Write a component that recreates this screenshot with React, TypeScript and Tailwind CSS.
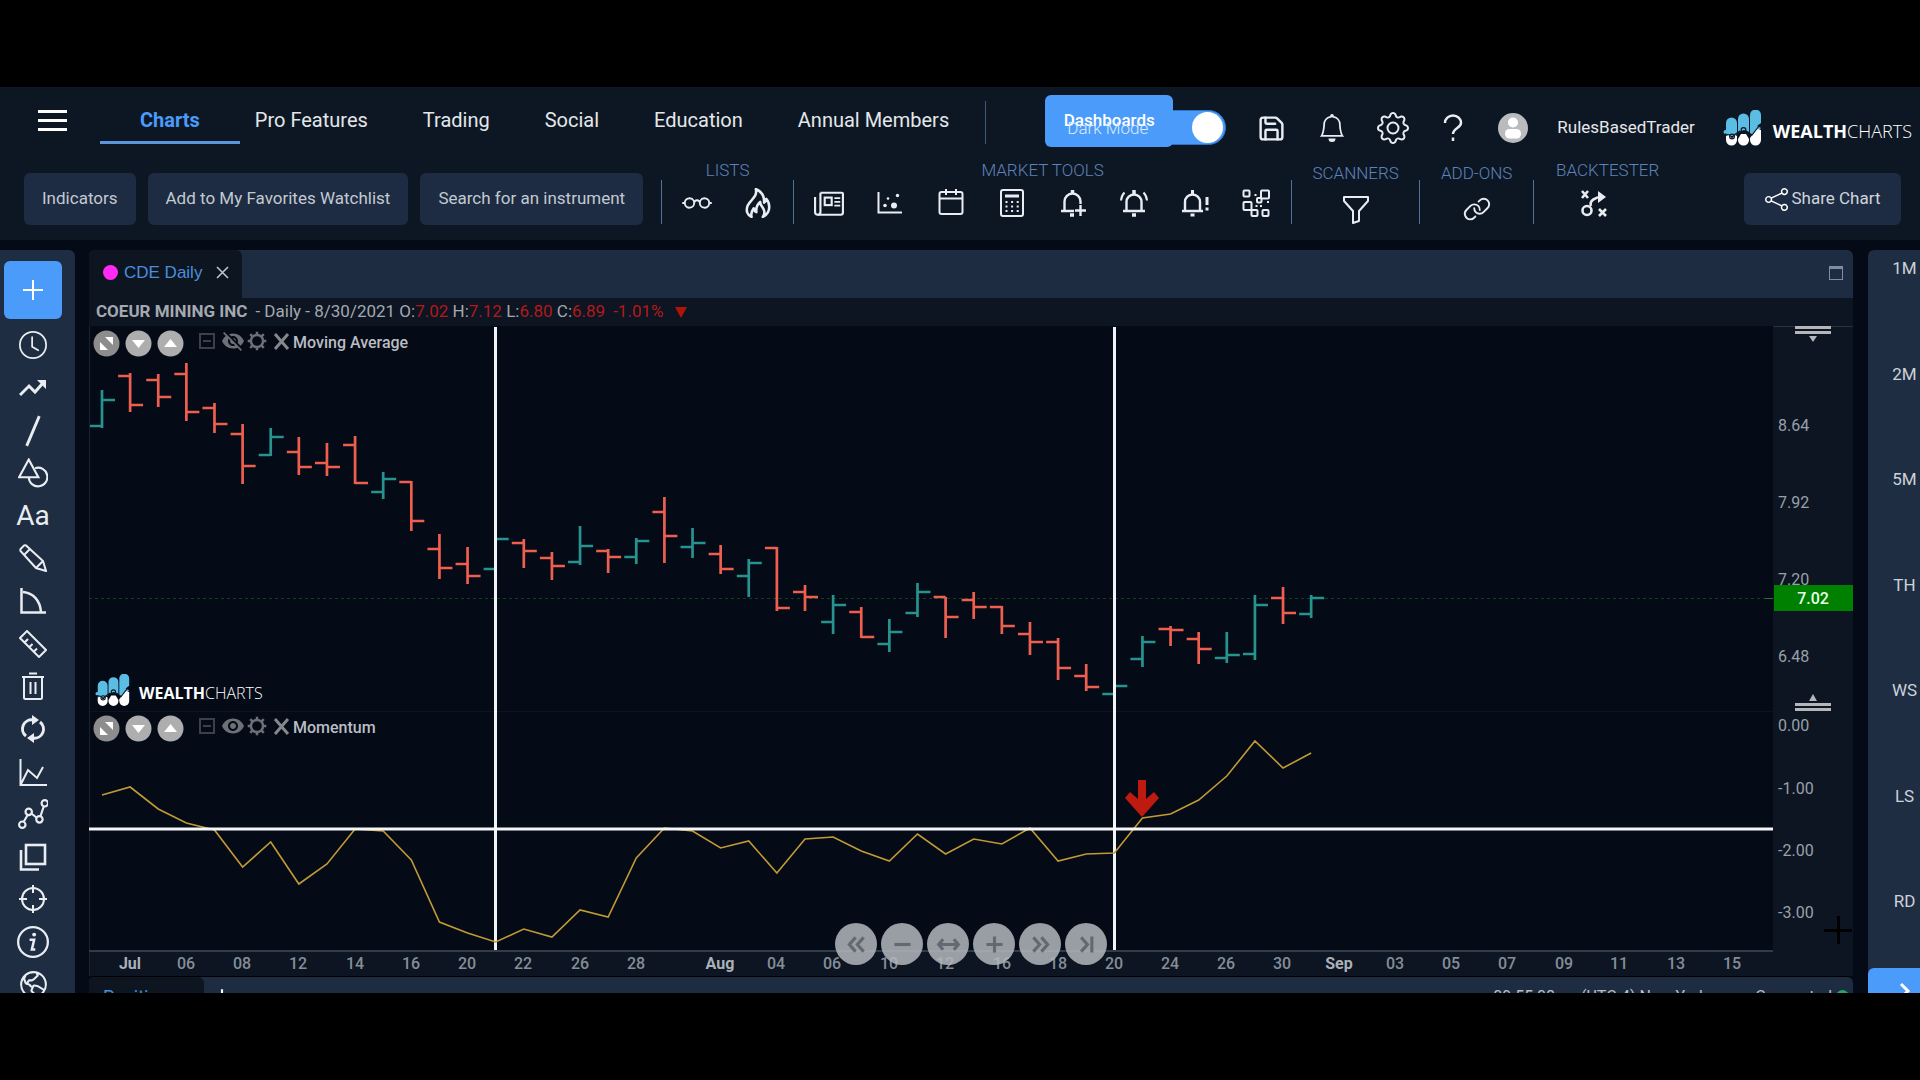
import React from "react";
import { BsGear, BsBell, BsEyeglasses, BsShare, BsFunnel, BsClock } from "react-icons/bs";
import { LuSave } from "react-icons/lu";
import { MdVisibility, MdVisibilityOff } from "react-icons/md";
import { PiLink, PiGlobeHemisphereWest } from "react-icons/pi";

type IconProps = { size?: number; children: React.ReactNode; width?: number };

function Icon({ size = 28, width = 2, children }: IconProps) {
  return (
    <svg width={size} height={size} viewBox="0 0 28 28" fill="none" stroke="currentColor" strokeWidth={width} aria-hidden="true">
      {children}
    </svg>
  );
}

function LogoMark({ size }: { size: number }) {
  return (
    <svg width={size} height={(size * 36) / 40} viewBox="0 0 40 36" aria-hidden="true">
      <g fill="#5bbce4">
        <path d="M3 25V13a5 5 0 0 1 11 0v11l-5 2z" />
        <path d="M15 22V9a5 5 0 0 1 11 0v13l-5-2z" />
        <path d="M27 24V5a5 5 0 0 1 11 0v8l-4 3 4 2-7 7z" />
      </g>
      <circle cx="2.500" cy="22" r="2" fill="#5bbce4" />
      <g fill="#fff">
        <path d="M3 26l3-1 3 3.500 3-3.500 2 1v4a5.500 5.500 0 0 1-11 0z" />
        <path d="M15 29l3-5h5l3 5v1a5.500 5.500 0 0 1-11 0z" />
        <path d="M27 28l7-9 4 1v10a5.500 5.500 0 0 1-11 0z" />
      </g>
      <g fill="none" stroke="#0d1724" strokeWidth="1.200">
        <path d="M2 24l5 1M11 25l6-4M23 21l6 4 7-9" />
        <circle cx="9" cy="26.500" r="2.400" />
        <circle cx="20.500" cy="20" r="2.400" />
      </g>
    </svg>
  );
}

function Logo({ small = false }: { small?: boolean }) {
  return (
    <div className={small ? "flex items-center gap-2" : "flex items-center gap-2.5"}>
      <LogoMark size={small ? 36 : 40} />
      <span className={small ? "pt-1.5 font-['Open_Sans'] text-[16px] leading-5 text-white" : "pt-1.5 font-['Open_Sans'] text-[18px] leading-5 text-white"}>
        <b>WEALTH</b>
        <span className="font-light">CHARTS</span>
      </span>
    </div>
  );
}

const marketTools = [
  {
    name: "News",
    icon: (
      <Icon size={31}>
        <path d="M6 4h20a1 1 0 0 1 1 1v17.500a2 2 0 0 1-2 2H3.500a2.500 2.500 0 0 1-2.500-2.500V8" />
        <path d="M6 4v18a2.500 2.500 0 0 1-2.500 2.500" />
        <rect x="10" y="8.500" width="6.500" height="7" />
        <path d="M19 9h5.500M19 12.500h5.500M19 16h5.500" strokeWidth="1.600" />
      </Icon>
    ),
  },
  {
    name: "Scatter plot",
    icon: (
      <Icon>
        <path d="M2.500 3v20.500H26" />
        <g fill="currentColor" stroke="none">
          <circle cx="9" cy="16.500" r="1.800" />
          <circle cx="18" cy="16.500" r="3" />
          <circle cx="12" cy="9.500" r="1.300" />
          <circle cx="21.500" cy="6.500" r="1.700" />
        </g>
      </Icon>
    ),
  },
  {
    name: "Calendar",
    icon: (
      <Icon>
        <rect x="2.500" y="3" width="23" height="22" rx="2" />
        <path d="M2.500 9.500h23M9 0v6M19 0v6" />
      </Icon>
    ),
  },
  {
    name: "Calculator",
    icon: (
      <Icon>
        <rect x="3" y="1" width="22" height="26" rx="2" />
        <path d="M7 7h14" strokeWidth="3" />
        <path d="M7.500 13h14M7.500 17.500h14M7.500 22h14" strokeDasharray="2 3.600" />
      </Icon>
    ),
  },
  {
    name: "Add alert",
    icon: (
      <Icon>
        <path d="M2 22h13M5.500 22V12.500a8 8 0 0 1 16 0V15M21.500 16v11M16 21.500h11" strokeWidth="2.400" />
        <path d="M13.500 1v3.500M11 26h4" strokeWidth="3.500" />
      </Icon>
    ),
  },
  {
    name: "Active alerts",
    icon: (
      <Icon>
        <path d="M3 22h22M6.500 22v-9a7.500 7.500 0 0 1 15 0v9" strokeWidth="2.400" />
        <path d="M14 1v4.500M12 26h4" strokeWidth="3.500" />
        <path d="M4.500 3.500q-3 3-3.500 8M23.500 3.500q3 3 3.500 8" />
      </Icon>
    ),
  },
  {
    name: "Alert log",
    icon: (
      <Icon>
        <path d="M1 22h21M4 22v-9a7.500 7.500 0 0 1 15 0v9" strokeWidth="2.400" />
        <path d="M11.500 1v4.500M9.500 26h4M26 8v8M26 18.500v3" strokeWidth="3" />
      </Icon>
    ),
  },
  {
    name: "Heat map",
    icon: (
      <Icon>
        <rect x="1.500" y="1.500" width="6" height="6" rx="1" />
        <rect x="19" y="1.500" width="8" height="8" rx="1" />
        <rect x="15" y="9" width="4.500" height="4.500" rx="1" />
        <rect x="1.500" y="13" width="8" height="8" rx="1" />
        <rect x="9.500" y="21" width="6" height="6" rx="1" />
        <rect x="20.500" y="21" width="6" height="6" rx="1" />
        <path d="M12.500 6h2M18 17h2M25 13h2M13.500 17h2" />
      </Icon>
    ),
  },
];

function IconButton({ label, children, className = "" }: { label: string; children: React.ReactNode; className?: string }) {
  return (
    <button type="button" aria-label={label} className={"flex items-center justify-center text-[#e9edf2] " + className}>
      {children}
    </button>
  );
}

function Divider() {
  return <span className="mt-[25px] h-11 w-px shrink-0 bg-[#53709a]" />;
}

function ToolGroup({ title, className, children }: { title: string; className: string; children: React.ReactNode }) {
  return (
    <div className={"flex shrink-0 flex-col items-center " + className}>
      <span className="text-[17px] leading-5 font-light text-[#5f82b8]">{title}</span>
      {children}
    </div>
  );
}

const navItems = ["Charts", "Pro Features", "Trading", "Social", "Education", "Annual Members"];

function Header() {
  return (
    <header className="shrink-0 bg-[#0d1724]">
      <div className="flex h-[68px] items-start">
        <button type="button" aria-label="Menu" className="ml-[38px] mt-[23px] flex w-[29px] shrink-0 flex-col gap-1.5">
          <span className="h-[3px] bg-white" />
          <span className="h-[3px] bg-white" />
          <span className="h-[3px] bg-white" />
        </button>
        <nav className="ml-[73px] mt-[21px] flex shrink-0 gap-[55px] text-[20px] leading-6 text-[#e4e7ea]">
          {navItems.map((n, i) => (
            <a key={n} href="#" className={i === 0 ? "relative font-bold text-[#4a9bfa]" : ""}>
              {n}
              {i === 0 && <span className="absolute -inset-x-10 top-[33px] h-[3px] bg-[#5c97dd]" />}
            </a>
          ))}
        </nav>
        <span className="ml-9 mt-3.5 h-[43px] w-px shrink-0 bg-[#41587b]" />
        <div className="relative ml-auto mt-2 h-[52px] w-[181px] shrink-0">
          <label className="absolute right-0 top-[15px] flex h-[35px] w-[70px] cursor-pointer items-center justify-end rounded-full border border-[#2f73c4] bg-[#4a9bfa] pr-0.5">
            <input type="checkbox" defaultChecked aria-label="Dark Mode" className="peer sr-only" />
            <span className="size-[31px] rounded-full bg-white" />
          </label>
          <button type="button" className="absolute left-0 top-0 h-[52px] w-32 rounded-md bg-[#4a9bfa] text-[17px] font-medium text-white">
            Dashboards
          </button>
          <span className="pointer-events-none absolute left-[22px] top-[23px] text-[17px] leading-5 font-light text-[#dcebff]">Dark Mode</span>
        </div>
        <div className="ml-[30px] mt-6 flex h-[34px] shrink-0 items-center">
          <IconButton label="Save" className="w-[30px]"><LuSave size={29} strokeWidth={2} /></IconButton>
          <IconButton label="Notifications" className="ml-[31px] w-[30px]"><BsBell size={28} /></IconButton>
          <IconButton label="Settings" className="ml-[30px] w-8"><BsGear size={32} /></IconButton>
          <IconButton label="Help" className="ml-[30px] w-7">
            <Icon width={2.5}>
              <path d="M6 9a8 7.500 0 0 1 16 0c0 5-8 5-8 11" />
              <path d="M14 23.500v3.500" />
            </Icon>
          </IconButton>
          <svg width="30" height="30" viewBox="0 0 30 30" className="ml-[31px]" aria-hidden="true">
            <circle cx="15" cy="15" r="15" fill="#b9bbbd" />
            <circle cx="15" cy="9.500" r="5" fill="#fff" />
            <rect x="7" y="16" width="16" height="9.500" rx="4.500" fill="#fff" />
          </svg>
          <span className="ml-[29px] text-[17px] text-[#e6e8ea]">RulesBasedTrader</span>
          <span className="ml-7 mr-2"><Logo /></span>
        </div>
      </div>

      <div className="flex h-[85px] items-start">
        <div className="ml-6 mt-[18px] flex shrink-0 gap-3 text-[17px] text-[#c3c9d1]">
          {["Indicators", "Add to My Favorites Watchlist", "Search for an instrument"].map((t) => (
            <button key={t} type="button" className="h-[52px] rounded-md bg-[#1d2c42] px-[18px]">{t}</button>
          ))}
        </div>
        <span className="w-[18px] shrink-0" />
        <Divider />
        <ToolGroup title="LISTS" className="mt-[5px] w-[131px]">
          <div className="mt-2 flex h-[30px] items-center gap-[31px]">
            <IconButton label="Watchlists" className="w-[30px]"><BsEyeglasses size={32} /></IconButton>
            <IconButton label="Hot list" className="w-[30px]">
              <Icon size={30} width={2.4}>
                <path d="M12 1c1 5-1 7-4 10.500c-4 4-5.500 7-4 11.500c.8 2 2 3.300 4 4c-1-3.500.5-6 2-8c.5 2 1 3 2.500 3.500c-.5-4 .5-7 3.500-9.500c0 4 4 5.500 4 9.500c0 2-.5 3.500-1.500 4.500c4-2 6-5 6-9.300c0-3-1-5.500-2.800-7.500c-.3 2-1 3-2 3.500c.3-5-2-10.200-7.700-12.700z" strokeLinejoin="round" />
              </Icon>
            </IconButton>
          </div>
        </ToolGroup>
        <Divider />
        <ToolGroup title="MARKET TOOLS" className="mt-[5px] w-[497px]">
          <div className="mt-2 flex h-[30px] items-center gap-[31px]">
            {marketTools.map((t) => (
              <IconButton key={t.name} label={t.name} className="w-[30px]">{t.icon}</IconButton>
            ))}
          </div>
        </ToolGroup>
        <Divider />
        <ToolGroup title="SCANNERS" className="mt-2 w-[127px]">
          <IconButton label="Scanners" className="mt-3 h-[30px]"><BsFunnel size={32} /></IconButton>
        </ToolGroup>
        <Divider />
        <ToolGroup title="ADD-ONS" className="mt-2 w-[113px]">
          <IconButton label="Add-ons" className="mt-[11px] h-[30px]"><PiLink size={30} /></IconButton>
        </ToolGroup>
        <Divider />
        <ToolGroup title="BACKTESTER" className="mt-[5px] w-[147px]">
          <IconButton label="Backtester" className="mr-7 mt-2 h-[30px]">
            <Icon width={2.6}>
              <path d="M2 2l6 7M8 2l-6 7M19 20l7 7M26 20l-7 7" />
              <circle cx="7" cy="21.500" r="4.500" />
              <path d="M11 17c-2-5 4-9 11-9" />
              <path d="M18 2l8 6-8 6z" fill="currentColor" stroke="none" />
            </Icon>
          </IconButton>
        </ToolGroup>
        <button type="button" className="ml-auto mr-[19px] mt-[18px] flex h-[52px] w-[157px] shrink-0 items-center justify-center gap-1 rounded-md bg-[#1d2c42] text-[17px] text-[#d0d5dc]">
          <BsShare size={23} className="text-white" />
          Share Chart
        </button>
      </div>
    </header>
  );
}

const drawTools: { name: string; icon: React.ReactNode }[] = [
  { name: "History", icon: <BsClock size={28} /> },
  { name: "Trend", icon: <Icon><path d="M1 21l9-9 6 6 8-9" strokeWidth="3" /><path d="M18 6h9v9z" fill="currentColor" stroke="none" /></Icon> },
  { name: "Line", icon: <Icon size={32}><path d="M8.500 27L19.500 1" strokeWidth="2.500" /></Icon> },
  { name: "Shapes", icon: <Icon size={30}><path d="M10 1.500l9 16.500H1z" /><path d="M16 9.500a8.700 8.700 0 1 1-6 8.500" /></Icon> },
  { name: "Text", icon: <span className="text-[28px] leading-8">Aa</span> },
  { name: "Pencil", icon: <Icon><path d="M1.500 7a3 3 0 0 1 0-2L5 1.500a3 3 0 0 1 2 0L24 17l3 10-10-3zM5.500 10.500l5-5M17 24l7-7" /></Icon> },
  { name: "Angle", icon: <Icon><path d="M2.500 1v24.500H27M4 5c10 1 17 8 18 20" strokeWidth="2.500" /></Icon> },
  { name: "Ruler", icon: <Icon><path d="M1 8l7-7 19 19-7 7zM6 12l3-3M10.500 17l3-3M15 21.500l3-3" /></Icon> },
  { name: "Delete", icon: <Icon><path d="M3 5h22M10 1.500h8M5 5v20.500a1.500 1.500 0 0 0 1.500 1.500h15a1.500 1.500 0 0 0 1.500-1.500V5M11.500 10v12M16.500 10v12" /></Icon> },
  {
    name: "Reset",
    icon: (
      <Icon width={3}>
        <path d="M14 5a9 9 0 0 0-7 16M14 23a9 9 0 0 0 7-16" />
        <path d="M13 0l7 5-7 5zM15 18l-7 5 7 5z" fill="currentColor" stroke="none" />
      </Icon>
    ),
  },
  { name: "Chart", icon: <Icon><path d="M1.500 1v26H28M2 26l7-14 9 8 6-11" /></Icon> },
  {
    name: "Pattern",
    icon: (
      <Icon size={30}>
        <circle cx="4" cy="24" r="3" />
        <circle cx="10" cy="12" r="3" />
        <circle cx="20" cy="19" r="3" />
        <circle cx="25" cy="4" r="3" />
        <path d="M5.500 21L9 15M12.500 13.500l5 4M21 16l3-9" />
      </Icon>
    ),
  },
  { name: "Duplicate", icon: <Icon width={2.6}><rect x="7" y="2" width="19" height="19" /><path d="M2 7v19.500h18" /></Icon> },
  { name: "Crosshair", icon: <Icon><circle cx="14" cy="14" r="11" /><path d="M14 0v8M14 20v8M0 14h8M20 14h8" /></Icon> },
  {
    name: "Info",
    icon: (
      <Icon size={32}>
        <circle cx="14" cy="14" r="13" />
        <circle cx="15" cy="7.500" r="1.700" fill="currentColor" stroke="none" />
        <path d="M11 12h4l-2 8.500h3" strokeWidth="2.200" />
      </Icon>
    ),
  },
  { name: "Globe", icon: <PiGlobeHemisphereWest size={33} /> },
];

function LeftToolbar() {
  return (
    <aside className="flex w-[75px] shrink-0 flex-col items-start overflow-hidden rounded-tr-md bg-[#1e2d42] pl-1 pt-[11px]">
      <IconButton label="Add" className="size-[58px] shrink-0 rounded-md bg-[#4a9bfa] text-white">
        <Icon><path d="M14 4v20M4 14h20" /></Icon>
      </IconButton>
      <div className="mt-[5px] flex h-[682px] w-[58px] shrink-0 flex-col text-[#eef2f7]">
        {drawTools.map((t) => (
          <IconButton key={t.name} label={t.name} className="min-h-0 flex-1">{t.icon}</IconButton>
        ))}
      </div>
    </aside>
  );
}

const BAR_STEP = 28.12;
const BAR_START = 102;
const barX = (i: number) => BAR_START + BAR_STEP * i;

// open, high, low, close as heights on the price pane
const bars: number[][] = [
  [426, 390, 427, 400], [376, 373, 411, 405], [380, 374, 406, 397], [374, 363, 420, 412], [408, 403, 432, 424],
  [434, 424, 483, 466], [455, 428, 455, 437], [452, 437, 474, 467], [463, 443, 475, 467], [445, 436, 483, 483],
  [492, 472, 498, 479], [482, 481, 530, 521], [549, 534, 578, 568], [564, 547, 583, 576], [569, 536, 572, 539],
  [543, 539, 567, 551], [558, 552, 579, 566], [562, 526, 564, 546], [551, 549, 572, 557], [557, 538, 563, 541],
  [512, 497, 562, 536], [547, 528, 557, 543], [554, 545, 573, 569], [576, 559, 596, 563], [548, 547, 610, 608],
  [592, 585, 610, 597], [622, 595, 633, 605], [612, 607, 637, 637], [644, 619, 651, 632], [613, 583, 616, 592],
  [597, 597, 637, 617], [600, 592, 618, 607], [607, 606, 633, 626], [634, 622, 654, 642], [642, 638, 679, 668],
  [676, 664, 690, 687], [694, 684, 697, 686], [659, 636, 666, 642], [629, 626, 645, 630], [639, 632, 663, 649],
  [658, 632, 662, 655], [654, 595, 659, 605], [598, 587, 623, 613], [614, 595, 617, 598],
];

const momentum = [
  795, 787, 809, 823, 830, 867, 842, 884, 864, 829, 831, 860, 922, 933, 942, 929, 937, 910, 917, 858, 828, 831,
  848, 841, 873, 839, 837, 851, 861, 834, 854, 839, 844, 828, 861, 854, 853, 818, 814, 800, 776, 741, 768, 753,
];

const dates: [string, number][] = [
  ["Jul", 130], ["06", 186], ["08", 242], ["12", 298], ["14", 355], ["16", 411], ["20", 467], ["22", 523], ["26", 580],
  ["28", 636], ["Aug", 720], ["04", 776], ["06", 832], ["10", 889], ["12", 945], ["16", 1002], ["18", 1058], ["20", 1114],
  ["24", 1170], ["26", 1226], ["30", 1282], ["Sep", 1339], ["03", 1395], ["05", 1451], ["07", 1507], ["09", 1564],
  ["11", 1619], ["13", 1676], ["15", 1732],
];

const prices: [string, number][] = [
  ["8.64", 425], ["7.92", 502], ["7.20", 579], ["6.48", 656], ["0.00", 725], ["-1.00", 788], ["-2.00", 850], ["-3.00", 912],
];

function Plot() {
  return (
    <svg viewBox="89 326 1684 650" preserveAspectRatio="xMinYMin slice" className="block h-full min-w-0 flex-1" role="img" aria-label="CDE daily price and momentum">
      <rect x="89" y="326" width="1684" height="625" fill="#040a16" />
      <rect x="89" y="951" width="1684" height="25" fill="#0c1521" />
      <path d="M89 711.500h1684" stroke="#0d1420" strokeWidth="1" />
      <path d="M89.500 326v650" stroke="#1a2330" strokeWidth="1" />
      <path d="M89 951h1684" stroke="#323b48" strokeWidth="2" />
      <path d="M89 598.500h1676" stroke="#14401f" strokeWidth="1" strokeDasharray="3 3" />
      <path d="M1765 598.500h8" stroke="#1d7a1d" strokeWidth="1" />
      {bars.map(([o, h, l, c], i) => {
        const x = barX(i);
        return (
          <path
            key={i}
            d={`M${x} ${h}V${l + 1}M${x - 12} ${o}H${x}M${x} ${c}h13`}
            stroke={c < o ? "#26938f" : "#ee5f50"}
            strokeWidth="2.700"
            fill="none"
          />
        );
      })}
      <path d="M495.500 327V950M1114.500 327V950" stroke="#f2f4f8" strokeWidth="3" />
      <polyline points={momentum.map((y, i) => `${barX(i)},${y}`).join(" ")} fill="none" stroke="#c19a35" strokeWidth="1.600" />
      <path d="M89 829H1773" stroke="#f4f5f6" strokeWidth="3" />
      <path d="M1138 780h8v19l8-7 5 6-17 19-17-19 5-6 8 7z" fill="#bf1a10" />
      {dates.map(([t, x], i) => (
        <text key={i} x={x} y="969" textAnchor="middle" fontSize="16" fontWeight={t.length > 2 ? 700 : 500} fill={t.length > 2 ? "#aab0b8" : "#858d98"}>
          {t}
        </text>
      ))}
    </svg>
  );
}

function PriceAxis() {
  return (
    <svg width="80" viewBox="1773 326 80 650" preserveAspectRatio="xMinYMin slice" className="block h-full shrink-0" role="img" aria-label="Price axis">
      <rect x="1773" y="326" width="80" height="650" fill="#0c1521" />
      <path d="M1773 326.500h80" stroke="#2a313b" />
      {prices.map(([t, y]) => (
        <text key={t} x="1778" y={y + 6} fontSize="16" fill="#99a0a9">{t}</text>
      ))}
      <rect x="1774" y="585" width="79" height="26" fill="#008000" />
      <text x="1813" y="604" textAnchor="middle" fontSize="16" fontWeight="500" fill="#e8ffe8">7.02</text>
      <g fill="#b4b6ba">
        <path d="M1795 326h36v3h-36zM1795 331h36v3h-36zM1809 336h8l-4 6z" />
        <path d="M1809 701h8l-4-7zM1795 703h36v3h-36zM1795 708h36v3h-36z" />
      </g>
      <path d="M1838.500 916v28M1824 930.500h28" stroke="#000" strokeWidth="3" />
    </svg>
  );
}

function PaneControls({ name, hidden }: { name: string; hidden?: boolean }) {
  return (
    <div className="flex items-center">
      <div className="flex gap-[5px]">
        {[
          { n: "Expand", d: "M12 7h8v8zM7 12v8h8z", c: "#8d8d8e" },
          { n: "Move down", d: "M7 10h13l-6.500 8z", c: "#aeaeaf" },
          { n: "Move up", d: "M7 17h13L13.500 9z", c: "#aeaeaf" },
        ].map((b) => (
          <button key={b.n} type="button" aria-label={b.n + " " + name}>
            <svg width="27" height="27" viewBox="0 0 27 27">
              <circle cx="13.500" cy="13.500" r="13" fill={b.c} />
              <path d={b.d} fill="#fff" />
            </svg>
          </button>
        ))}
      </div>
      <div className="mb-1 ml-[15px] flex items-center gap-1.5 text-[#6d7076]">
        <button type="button" aria-label={"Collapse " + name} className="flex size-4 items-center justify-center border-2 border-[#3c4048]">
          <span className="h-0.5 w-2 bg-[#3c4048]" />
        </button>
        <button type="button" aria-label={"Toggle " + name}>{hidden ? <MdVisibilityOff size={24} /> : <MdVisibility size={24} />}</button>
        <button type="button" aria-label={"Configure " + name} className="-ml-1">
          <Icon size={20} width={3.5}>
            <circle cx="14" cy="14" r="8.500" />
            <path d="M14 1v5M14 22v5M1 14h5M22 14h5M4.500 4.500l4 4M19.500 19.500l4 4M23.500 4.500l-4 4M8.500 19.500l-4 4" />
          </Icon>
        </button>
        <button type="button" aria-label={"Remove " + name}>
          <svg width="17" height="17" viewBox="0 0 17 17"><path d="M2 1l13 15M15 1L2 16" stroke="#85878a" strokeWidth="3" /></svg>
        </button>
      </div>
      <span className="ml-[3px] text-[16px] leading-5 font-medium text-[#b9bdc4]">{name}</span>
    </div>
  );
}

const navButtons = [
  { n: "Scroll left", d: "M13 6l-7 8 7 8M22 6l-7 8 7 8" },
  { n: "Zoom out", d: "M5 14h18" },
  { n: "Fit", d: "M3 14h22M8 8l-5 6 5 6M20 8l5 6-5 6" },
  { n: "Zoom in", d: "M5 14h18M14 5v18" },
  { n: "Scroll right", d: "M6 6l7 8-7 8M15 6l7 8-7 8" },
  { n: "Go to latest", d: "M8 6l7 8-7 8M20 5v18" },
];

function ChartPanel() {
  return (
    <main className="ml-3.5 flex min-w-0 flex-1 flex-col">
      <div className="flex h-12 shrink-0 items-stretch rounded-t-md bg-[#1d2c41]">
        <div className="flex w-[153px] items-center rounded-t-md bg-[#0d1520] pb-[3px] pl-3.5">
          <span className="size-[15px] rounded-full bg-[#ff2bf5]" />
          <a href="#" className="ml-1.5 font-['Liberation_Sans'] text-[17px] text-[#4c8edb]">CDE Daily</a>
          <button type="button" aria-label="Close tab" className="ml-3.5 text-[#bfc4ca]">
            <svg width="13" height="13" viewBox="0 0 13 13"><path d="M1 1l11 11M12 1L1 12" stroke="currentColor" strokeWidth="1.600" /></svg>
          </button>
        </div>
        <button type="button" aria-label="Maximize" className="ml-auto mr-2.5 mt-4 h-3.5 w-3.5 border border-t-[3px] border-[#7d8da4]" />
      </div>
      <div className="flex h-7 shrink-0 items-center whitespace-pre bg-[#0c1521] pl-[7px] text-[17px] text-[#a4a9b0]">
        <b className="font-bold">COEUR MINING INC</b>
        <span className="ml-2">- Daily - 8/30/2021 O:</span>
        <span className="text-[#b3191c]">7.02</span>
        <span> H:</span>
        <span className="text-[#b3191c]">7.12</span>
        <span> L:</span>
        <span className="text-[#b3191c]">6.80</span>
        <span> C:</span>
        <span className="text-[#b3191c]">6.89</span>
        <span className="ml-2 text-[#b3191c]">-1.01%</span>
        <svg width="12" height="12" viewBox="0 0 12 12" className="ml-3"><path d="M0 1h12L6 12z" fill="#b01408" /></svg>
      </div>
      <div className="relative flex min-h-0 flex-1">
        <Plot />
        <PriceAxis />
        <div className="absolute left-1 top-[3px]"><PaneControls name="Moving Average" hidden /></div>
        <div className="absolute left-1.5 top-[348px]"><Logo small /></div>
        <div className="absolute left-1 top-[388px]"><PaneControls name="Momentum" /></div>
        <div className="absolute bottom-[11px] left-[746px] flex gap-1">
          {navButtons.map((b) => (
            <button key={b.n} type="button" aria-label={b.n} className="flex size-[42px] items-center justify-center rounded-full bg-[#b4b7bd]/85 text-[#656870]">
              <Icon size={25} width={3.5}><path d={b.d} /></Icon>
            </button>
          ))}
        </div>
      </div>
      <div className="-mb-[23px] flex h-10 shrink-0 items-center rounded-t-md border-t border-black bg-[#1d2c41] text-[16px] text-[#b9c0ca]">
        <a href="#" className="flex h-full w-[115px] items-center rounded-t-md bg-[#0d1520] pl-[14px] text-[18px] text-[#4c8edb]">Positions</a>
        <button type="button" aria-label="Add tab" className="ml-2 flex text-white"><Icon size={20} width={3}><path d="M14 3v22M3 14h22" /></Icon></button>
        <span className="ml-auto">09:55:08</span>
        <span className="ml-[26px]">(UTC-4) New York</span>
        <span className="ml-12">Connected</span>
        <span className="mx-1 size-[13px] rounded-full bg-[#27a565]" />
      </div>
    </main>
  );
}

function RightPanel() {
  return (
    <aside className="ml-[15px] flex w-[52px] shrink-0 flex-col overflow-hidden rounded-tl-md bg-[#1e2d42]">
      <div className="flex w-[73px] flex-1 flex-col justify-between pb-[57px] pt-2 text-[17px] leading-5 text-[#ccd2da]">
        {["1M", "2M", "5M", "TH", "WS", "LS", "RD"].map((t) => (
          <button key={t} type="button" className="h-5">{t}</button>
        ))}
      </div>
      <button type="button" aria-label="Expand panel" className="-mb-5 flex h-[45px] w-[73px] shrink-0 items-center justify-center rounded-tl-md bg-[#4a9bfa] text-white">
        <svg width="12" height="18" viewBox="0 0 12 18" fill="none" stroke="currentColor" strokeWidth="3"><path d="M2 2l7 7-7 7" /></svg>
      </button>
    </aside>
  );
}

export default function App() {
  return (
    <div className="min-h-screen overflow-hidden bg-black py-[87px] font-[Roboto,sans-serif]">
      <div className="flex h-[calc(100vh-174px)] flex-col overflow-hidden bg-[#050a17]">
        <Header />
        <div className="flex min-h-0 flex-1 pt-2.5">
          <LeftToolbar />
          <ChartPanel />
          <RightPanel />
        </div>
      </div>
    </div>
  );
}
